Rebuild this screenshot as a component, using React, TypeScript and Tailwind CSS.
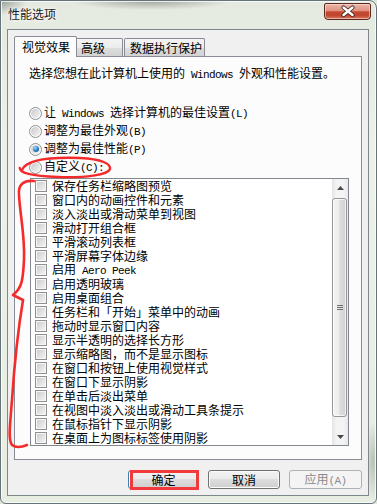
import React from "react";

const M = ({ c }: { c: string }) => (
  <span className="font-['Liberation_Mono',monospace] text-[11px] tracking-[-0.6px] whitespace-pre">{c}</span>
);

const items: React.ReactNode[] = [
  "保存任务栏缩略图预览",
  "窗口内的动画控件和元素",
  "淡入淡出或滑动菜单到视图",
  "滑动打开组合框",
  "平滑滚动列表框",
  "平滑屏幕字体边缘",
  <>
    启用<M c=" Aero Peek" />
  </>,
  "启用透明玻璃",
  "启用桌面组合",
  "任务栏和「开始」菜单中的动画",
  "拖动时显示窗口内容",
  "显示半透明的选择长方形",
  "显示缩略图，而不是显示图标",
  "在窗口和按钮上使用视觉样式",
  "在窗口下显示阴影",
  "在单击后淡出菜单",
  "在视图中淡入淡出或滑动工具条提示",
  "在鼠标指针下显示阴影",
  "在桌面上为图标标签使用阴影",
];

function Radio({ checked }: { checked?: boolean }) {
  return (
    <span className="w-[13px] h-[13px] rounded-full border border-[#8e8f8f] bg-[#fbfbfb] flex items-center justify-center shrink-0">
      <span className="w-[9px] h-[9px] rounded-full bg-[linear-gradient(135deg,#c9c9c9,#f4f4f4)] flex items-center justify-center">
        {checked && (
          <span className="w-[6px] h-[6px] rounded-full bg-[radial-gradient(circle_at_35%_30%,#9fd8ff,#2a7cc4_55%,#0d4a82)]" />
        )}
      </span>
    </span>
  );
}

function Check() {
  return (
    <span className="w-[12px] h-[12px] border border-[#8e8f8f] bg-[#f6f6f6] p-[1px] shrink-0 flex">
      <span className="block w-full h-full bg-[linear-gradient(135deg,#cdcdcd,#f3f3f3)]" />
    </span>
  );
}

function Btn({
  children,
  w,
  kind,
}: {
  children: React.ReactNode;
  w: string;
  kind?: "default" | "disabled";
}) {
  if (kind === "disabled") {
    return (
      <div
        className={`${w} h-[19px] rounded-[3px] border border-[#adb2b5] bg-[#f4f4f4] text-[#8a8a8a] text-[12px] leading-[17px] flex items-center justify-center`}
      >
        <span>{children}</span>
      </div>
    );
  }
  return (
    <div
      className={`relative ${w} h-[19px] rounded-[3px] border ${
        kind === "default" ? "border-[#3c7fb1]" : "border-[#707070]"
      } bg-[linear-gradient(#f2f2f2,#ebebeb_45%,#dddddd_50%,#cfcfcf)] shadow-[inset_0_0_0_1px_#fbfbfb] text-[12px] leading-[17px] flex items-center justify-center`}
    >
      <span>{children}</span>
      {kind === "default" && (
        <div className="absolute left-[1px] top-[-1px] right-[-1px] bottom-[-2px] border-[3px] border-[#f33a3a]" />
      )}
    </div>
  );
}

export default function App() {
  return (
    <div className="relative w-[377px] h-[504px] overflow-hidden font-['Noto_Sans_CJK_SC',sans-serif] text-black bg-[#dfe6d9]">
      <div className="w-full h-full rounded-tr-[8px] rounded-b-[6px] border border-[#66737a] shadow-[inset_0_0_0_1px_rgba(255,255,255,0.75)] bg-[radial-gradient(ellipse_80px_9px_at_150px_0px,#a3a8a0,transparent),radial-gradient(ellipse_26px_14px_at_0px_0px,#9aa098,transparent),radial-gradient(ellipse_8px_40px_at_372px_460px,#b9c1b2,transparent),linear-gradient(180deg,#e4eadf,#edf1e9_30%,#e7ede1)] flex flex-col">
        {/* Title bar */}
        <div className="h-[28px] flex items-start justify-between shrink-0">
          <div className="ml-[7px] mt-[6px] text-[12px] leading-[14px] [text-shadow:0_0_6px_#ffffff,0_0_3px_#ffffff] text-[#1a1a1a]">
            性能选项
          </div>
          <div className="mt-[2px] mr-[5px] w-[47px] h-[17px] rounded-b-[4px] rounded-t-[2px] border border-[#5a2a22] bg-[linear-gradient(#ecb6a9,#de917f_45%,#c64a33_52%,#c0432c_75%,#d97a5f)] shadow-[inset_0_0_0_1px_rgba(255,220,210,0.6)]">
            <svg width="45" height="15" viewBox="0 0 45 15">
              <path d="M18.5 3.5 L27.5 11 M27.5 3.5 L18.5 11" stroke="#3b2320" strokeWidth="4.2" strokeLinecap="round" />
              <path d="M18.5 3.5 L27.5 11 M27.5 3.5 L18.5 11" stroke="#ffffff" strokeWidth="2.4" strokeLinecap="round" />
            </svg>
          </div>
        </div>

        {/* Client area */}
        <div className="ml-[6px] mr-[7px] h-[467px] shrink-0 border border-[#7d878c] bg-[#f0f0f0] flex flex-col px-[6px] pt-[6px]">
          {/* Tabs */}
          <div className="h-[20px] flex items-end shrink-0">
            <div className="relative z-10 mb-[-1px] w-[63px] h-[21px] border border-b-0 border-[#898c95] rounded-t-[2px] bg-[#fcfcfc] pl-[7px] pt-[3px] text-[12px] leading-[14px]">
              视觉效果
            </div>
            <div className="w-[46px] h-[18px] border border-l-0 border-b-0 border-[#898c95] rounded-tr-[2px] bg-[linear-gradient(#f4f4f4,#ececec_50%,#dedede_52%,#d2d2d2)] pl-[4px] pt-[2px] text-[12px] leading-[14px]">
              高级
            </div>
            <div className="ml-[1px] w-[81px] h-[18px] border border-b-0 border-[#898c95] rounded-t-[2px] bg-[linear-gradient(#f4f4f4,#ececec_50%,#dedede_52%,#d2d2d2)] pl-[5px] pt-[2px] text-[12px] leading-[14px]">
              数据执行保护
            </div>
          </div>

          {/* Tab panel */}
          <div className="h-[404px] shrink-0 border border-[#898c95] bg-[#fcfcfc] px-[14px] flex flex-col">
            <div className="mt-[9px] h-[16px] flex items-center text-[12px] whitespace-nowrap">
              <span>
                选择您想在此计算机上使用的<M c=" Windows " />外观和性能设置。
              </span>
            </div>

            <div className="mt-[22px] flex flex-col text-[12px]">
              <div className="h-[18px] flex items-center gap-[2px] whitespace-nowrap">
                <Radio />
                <span>
                  让<M c=" Windows " />选择计算机的最佳设置<M c="(L)" />
                </span>
              </div>
              <div className="h-[18px] flex items-center gap-[2px] whitespace-nowrap">
                <Radio />
                <span>
                  调整为最佳外观<M c="(B)" />
                </span>
              </div>
              <div className="h-[18px] flex items-center gap-[2px] whitespace-nowrap">
                <Radio checked />
                <span>
                  调整为最佳性能<M c="(P)" />
                </span>
              </div>
              <div className="h-[18px] flex items-center gap-[2px] whitespace-nowrap">
                <Radio />
                <span>
                  自定义<M c="(C):" />
                </span>
              </div>
            </div>

            {/* List box */}
            <div className="mt-[2px] ml-[1px] w-[319px] h-[268px] border border-[#828790] bg-white flex">
              <div className="flex-1 flex flex-col">
                {items.map((t, i) => (
                  <div key={i} className="h-[14px] shrink-0 flex items-center pl-[4px] whitespace-nowrap">
                    <Check />
                    <span className="ml-[5px] text-[12px] leading-[14px]">{t}</span>
                  </div>
                ))}
              </div>
              {/* Scrollbar */}
              <div className="w-[16px] flex flex-col bg-[linear-gradient(90deg,#e4e4e4,#f4f4f4_30%,#f4f4f4_70%,#e9e9e9)]">
                <div className="h-[17px] flex items-center justify-center">
                  <svg width="7" height="4" viewBox="0 0 7 4">
                    <path d="M3.5 0 L7 4 L0 4 Z" fill="#4a4a4a" />
                  </svg>
                </div>
                <div className="flex-1 pt-[2px] pb-[11px] pr-[1px]">
                  <div className="h-full rounded-[3px] border border-[#979797] bg-[linear-gradient(90deg,#f5f5f5,#ececec_45%,#dcdcdc_55%,#d2d2d2)] shadow-[inset_0_0_0_1px_rgba(255,255,255,0.7)] flex flex-col items-center justify-center gap-[1px]">
                    <span className="block w-[6px] h-[1px] bg-[#6f6f6f]" />
                    <span className="block w-[6px] h-[1px] bg-[#6f6f6f]" />
                    <span className="block w-[6px] h-[1px] bg-[#6f6f6f]" />
                  </div>
                </div>
                <div className="h-[17px] flex items-center justify-center">
                  <svg width="7" height="4" viewBox="0 0 7 4">
                    <path d="M0 0 L7 0 L3.5 4 Z" fill="#4a4a4a" />
                  </svg>
                </div>
              </div>
            </div>
          </div>

          {/* Buttons */}
          <div className="mt-[10px] flex justify-end gap-[9px]">
            <Btn w="w-[71px]" kind="default">确定</Btn>
            <Btn w="w-[72px]">取消</Btn>
            <Btn w="w-[73px]" kind="disabled">
              应用<M c="(A)" />
            </Btn>
          </div>
        </div>
      </div>

      {/* Red annotations */}
      <svg className="absolute left-0 top-0 pointer-events-none" width="377" height="504" viewBox="0 0 377 504">
        <path
          d="M22 170 C 26 160, 50 157, 80 158 C 102 159, 111 164, 110 169 C 108 175, 85 178, 58 177 C 32 176, 18 173, 20 167"
          fill="none"
          stroke="#f52a2a"
          strokeWidth="2.4"
        />
        <path
          d="M34 181 C 24 180, 18 184, 19 195 C 20 215, 25 235, 24 260 C 23 280, 22 288, 13 295 L 23 300 C 18 330, 14 370, 12 400 C 10 425, 8 440, 12 445 C 16 448, 22 447, 27 445"
          fill="none"
          stroke="#f52a2a"
          strokeWidth="2.6"
          strokeLinecap="round"
          strokeLinejoin="round"
        />
      </svg>
    </div>
  );
}
